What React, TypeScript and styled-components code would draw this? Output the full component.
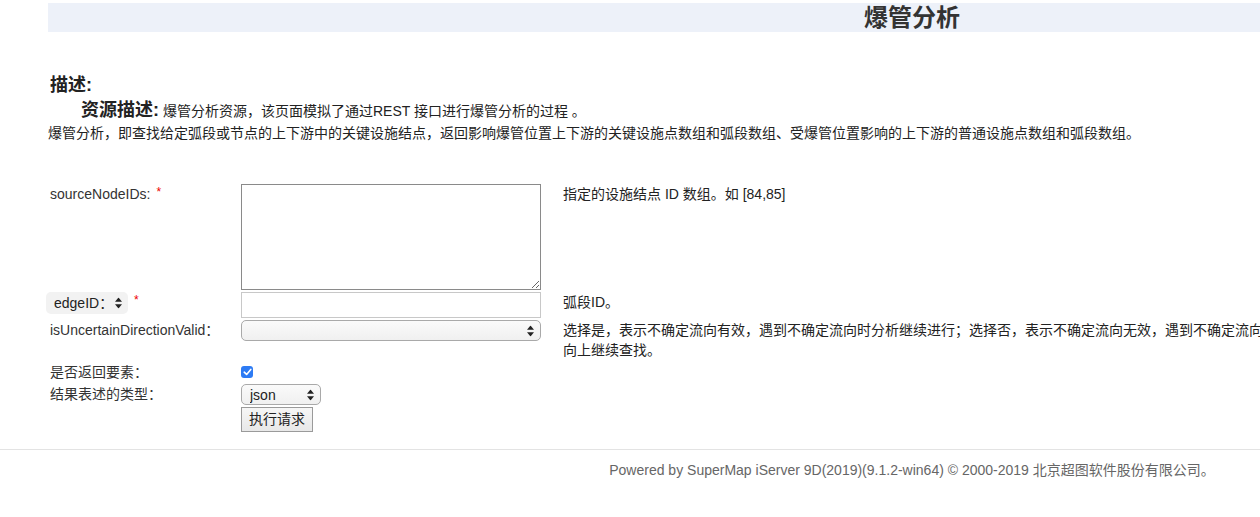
import styled, { createGlobalStyle } from 'styled-components'

const GlobalStyle = createGlobalStyle`
	html, body {
		margin: 0;
		padding: 0;
		overflow: hidden;
		background: #fff;
	}
	body {
		font-family: 'Liberation Sans', 'Noto Sans CJK SC', sans-serif;
		font-size: 14px;
		color: #333;
	}
`

const Page = styled.div`
	width: 1824px;
`

const Header = styled.div`
	margin: 3px 48px 0;
	height: 29px;
	background-color: #edf1f9;
	text-align: center;
`

const Title = styled.h1`
	margin: 0;
	font-size: 24px;
	line-height: 29px;
	font-weight: bold;
	color: #333;
`

const Description = styled.div`
	margin: 41px 0 0 48px;
`

const DescTitle = styled.h3`
	margin: 0 0 0 2px;
	font-size: 18px;
	line-height: 24px;
	font-weight: bold;
	color: #222;
`

const ResourceLine = styled.p`
	margin: 0;
	padding-left: 33px;
	line-height: 26px;
	font-size: 14px;
	color: #222;
`

const ResourceLabel = styled.strong`
	font-size: 18px;
	font-weight: bold;
	margin-right: 4px;
`

const Paragraph = styled.p`
	margin: 0;
	font-size: 14px;
	line-height: 18px;
	color: #222;
`

const FormGrid = styled.div`
	display: grid;
	grid-template-columns: 193px 322px 790px;
	row-gap: 2px;
	margin: 42px 0 0 48px;
	align-items: start;
`

const Label = styled.div<{ $lh?: number }>`
	padding-left: 2px;
	line-height: ${(p) => p.$lh ?? 20}px;
	color: #333;
	display: flex;
	align-items: center;
	gap: 6px;
`

const Required = styled.span`
	color: #e00;
	font-size: 12px;
	line-height: 12px;
	align-self: flex-start;
	margin-top: 2px;
`

const Cell = styled.div<{ $h?: number }>`
	display: flex;
	align-items: center;
	height: ${(p) => (p.$h ? `${p.$h}px` : 'auto')};
`

const Note = styled.div`
	line-height: 20px;
	color: #222;
`

const TextArea = styled.textarea`
	box-sizing: border-box;
	width: 300px;
	height: 106px;
	border: 1px solid #8a8a8a;
	margin: 0;
	padding: 2px;
	font-family: inherit;
	resize: both;
`

const TextInput = styled.input`
	box-sizing: border-box;
	width: 300px;
	height: 26px;
	margin: 0;
	border: 1px solid #c8c8c8;
	padding: 0 4px;
	font-family: inherit;
`

const SelectWrap = styled.div<{ $w: number; $h: number; $bare?: boolean }>`
	position: relative;
	box-sizing: border-box;
	width: ${(p) => p.$w}px;
	height: ${(p) => p.$h}px;
	margin-left: ${(p) => (p.$bare ? '-4px' : '0')};
	border: ${(p) => (p.$bare ? 'none' : '1px solid #a9a9a9')};
	border-radius: 5px;
	background: ${(p) => (p.$bare ? '#f2f2f2' : 'linear-gradient(#fafafa, #f0f0f0)')};
`

const NativeSelect = styled.select`
	appearance: none;
	border: none;
	background: transparent;
	width: 100%;
	height: 100%;
	margin: 0;
	padding: 0 8px;
	font-family: inherit;
	font-size: 14px;
	color: #222;
	outline: none;
`

const ArrowIcon = styled.svg`
	position: absolute;
	right: 6px;
	top: 50%;
	transform: translateY(-50%);
	pointer-events: none;
`

const Arrows = () => (
	<ArrowIcon width='7' height='11' viewBox='0 0 7 11'>
		<path d='M3.5 0 L7 4.3 L0 4.3 Z' fill='#222' />
		<path d='M3.5 11 L7 6.7 L0 6.7 Z' fill='#222' />
	</ArrowIcon>
)

const CheckBox = styled.span`
	display: inline-flex;
	align-items: center;
	justify-content: center;
	width: 12px;
	height: 12px;
	border-radius: 3px;
	background: #2d7bf4;
`

const Button = styled.button`
	box-sizing: border-box;
	height: 25px;
	padding: 0 7px;
	margin: 0;
	border: 1px solid #9a9a9a;
	background: linear-gradient(#f6f6f6, #e8e8e8);
	font-family: inherit;
	font-size: 14px;
	line-height: 23px;
	color: #222;
	border-radius: 0;
`

const Footer = styled.div`
	margin-top: 17px;
	border-top: 1px solid #e3e3e3;
	padding-top: 10px;
	text-align: center;
	line-height: 20px;
	color: #666;
`

export default function App() {
	return (
		<Page>
			<GlobalStyle />
			<Header>
				<Title>爆管分析</Title>
			</Header>
			<Description>
				<DescTitle>描述:</DescTitle>
				<ResourceLine>
					<ResourceLabel>资源描述:</ResourceLabel>
					爆管分析资源，该页面模拟了通过REST 接口进行爆管分析的过程 。
				</ResourceLine>
				<Paragraph>
					爆管分析，即查找给定弧段或节点的上下游中的关键设施结点，返回影响爆管位置上下游的关键设施点数组和弧段数组、受爆管位置影响的上下游的普通设施点数组和弧段数组。
				</Paragraph>
			</Description>
			<FormGrid>
				<Label>
					sourceNodeIDs: <Required>*</Required>
				</Label>
				<Cell>
					<TextArea />
				</Cell>
				<Note>指定的设施结点 ID 数组。如 [84,85]</Note>

				<Label $lh={22}>
					<SelectWrap $w={82} $h={22} $bare>
						<NativeSelect>
							<option>edgeID：</option>
							<option>nodeID：</option>
						</NativeSelect>
						<Arrows />
					</SelectWrap>
					<Required>*</Required>
				</Label>
				<Cell>
					<TextInput type='text' />
				</Cell>
				<Note>弧段ID。</Note>

				<Label>isUncertainDirectionValid：</Label>
				<Cell>
					<SelectWrap $w={300} $h={21}>
						<NativeSelect>
							<option></option>
							<option>true</option>
							<option>false</option>
						</NativeSelect>
						<Arrows />
					</SelectWrap>
				</Cell>
				<Note>
					选择是，表示不确定流向有效，遇到不确定流向时分析继续进行；选择否，表示不确定流向无效，遇到不确定流向将停止在该方向上继续查找。
				</Note>

				<Label>是否返回要素：</Label>
				<Cell $h={20}>
					<CheckBox>
						<svg width='9' height='8' viewBox='0 0 9 8'>
							<path d='M1.2 4.2 L3.6 6.4 L7.8 1.4' stroke='#fff' strokeWidth='1.6' fill='none' strokeLinecap='round' strokeLinejoin='round' />
						</svg>
					</CheckBox>
				</Cell>
				<div />

				<Label $lh={21}>结果表述的类型：</Label>
				<Cell>
					<SelectWrap $w={80} $h={21}>
						<NativeSelect>
							<option>json</option>
							<option>xml</option>
							<option>html</option>
						</NativeSelect>
						<Arrows />
					</SelectWrap>
				</Cell>
				<div />

				<div />
				<Cell>
					<Button>执行请求</Button>
				</Cell>
				<div />
			</FormGrid>
			<Footer>Powered by SuperMap iServer 9D(2019)(9.1.2-win64) © 2000-2019 北京超图软件股份有限公司。</Footer>
		</Page>
	)
}
